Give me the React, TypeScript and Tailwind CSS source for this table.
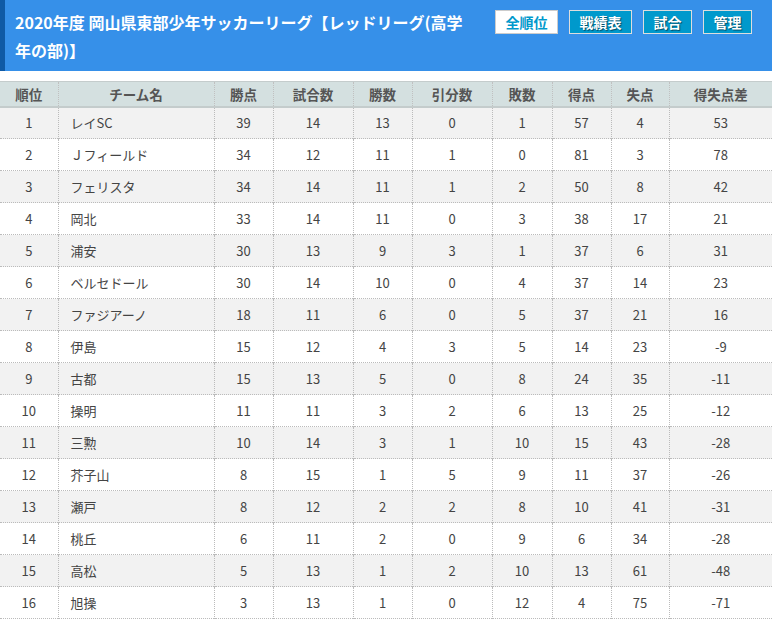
import React from "react";

const rows: (string | number)[][] = [
  [1, "レイSC", 39, 14, 13, 0, 1, 57, 4, 53],
  [2, "Ｊフィールド", 34, 12, 11, 1, 0, 81, 3, 78],
  [3, "フェリスタ", 34, 14, 11, 1, 2, 50, 8, 42],
  [4, "岡北", 33, 14, 11, 0, 3, 38, 17, 21],
  [5, "浦安", 30, 13, 9, 3, 1, 37, 6, 31],
  [6, "ベルセドール", 30, 14, 10, 0, 4, 37, 14, 23],
  [7, "ファジアーノ", 18, 11, 6, 0, 5, 37, 21, 16],
  [8, "伊島", 15, 12, 4, 3, 5, 14, 23, -9],
  [9, "古都", 15, 13, 5, 0, 8, 24, 35, -11],
  [10, "操明", 11, 11, 3, 2, 6, 13, 25, -12],
  [11, "三勲", 10, 14, 3, 1, 10, 15, 43, -28],
  [12, "芥子山", 8, 15, 1, 5, 9, 11, 37, -26],
  [13, "瀬戸", 8, 12, 2, 2, 8, 10, 41, -31],
  [14, "桃丘", 6, 11, 2, 0, 9, 6, 34, -28],
  [15, "高松", 5, 13, 1, 2, 10, 13, 61, -48],
  [16, "旭操", 3, 13, 1, 0, 12, 4, 75, -71],
];

const headers = ["順位", "チーム名", "勝点", "試合数", "勝数", "引分数", "敗数", "得点", "失点", "得失点差"];
const widths = [58, 156, 59, 80, 59, 80, 60, 59, 58, 103];

export default function App() {
  return (
    <div
      className="w-[772px] h-[619px] overflow-hidden bg-white"
      style={{ fontFamily: '"Noto Sans CJK JP", "Noto Sans", sans-serif' }}
    >
      <div className="flex h-[71px] bg-[#3690e9] border-l-[5px] border-[#0f5aa5]">
        <div className="w-[470px] pl-[10px] pt-[8px] text-[16px] font-bold leading-[28px] text-white">
          2020年度 岡山県東部少年サッカーリーグ【レッドリーグ(高学年の部)】
        </div>
        <div className="flex items-start gap-[11px] pt-[10px] pl-[20px]">
          <button className="flex h-[24px] w-[63px] items-center justify-center bg-white border border-[#cccccc] text-[#0099cc] text-[14px] font-bold leading-none">
            全順位
          </button>
          <button className="flex h-[24px] w-[63px] items-center justify-center bg-[#0099cc] border border-[#dddddd] text-white text-[14px] font-bold leading-none [text-shadow:1px_1px_1px_rgba(0,0,0,0.5)]">
            戦績表
          </button>
          <button className="flex h-[24px] w-[49px] items-center justify-center bg-[#0099cc] border border-[#dddddd] text-white text-[14px] font-bold leading-none [text-shadow:1px_1px_1px_rgba(0,0,0,0.5)]">
            試合
          </button>
          <button className="flex h-[24px] w-[49px] items-center justify-center bg-[#0099cc] border border-[#dddddd] text-white text-[14px] font-bold leading-none [text-shadow:1px_1px_1px_rgba(0,0,0,0.5)]">
            管理
          </button>
        </div>
      </div>
      <table className="mt-[10px] w-[772px] table-fixed border-collapse text-[13px]">
        <colgroup>
          {widths.map((w, i) => (
            <col key={i} style={{ width: w }} />
          ))}
        </colgroup>
        <thead>
          <tr className="h-[25px] bg-[#d4e0e0] border-t border-[#c4cccc] border-b-2 border-b-[#c4cccc]">
            {headers.map((h, i) => (
              <th
                key={i}
                className={
                  "font-bold text-[#555555] text-[13.5px] text-center p-0 " +
                  (i > 0 ? "border-l border-dotted border-l-[#c0c0c0]" : "")
                }
              >
                {h}
              </th>
            ))}
          </tr>
        </thead>
        <tbody>
          {rows.map((r, ri) => (
            <tr
              key={ri}
              className={
                "h-[32px] border-b border-dotted border-b-[#bbbbbb] " +
                (ri % 2 === 0 ? "bg-[#f2f2f2]" : "bg-white")
              }
            >
              {r.map((c, ci) => (
                <td
                  key={ci}
                  className={
                    "p-0 text-[#444444] " +
                    (ci === 1 ? "text-left pl-[12px] " : "text-center ") +
                    (ci > 0 ? "border-l border-dotted border-l-[#bbbbbb]" : "")
                  }
                >
                  {c}
                </td>
              ))}
            </tr>
          ))}
        </tbody>
      </table>
    </div>
  );
}
